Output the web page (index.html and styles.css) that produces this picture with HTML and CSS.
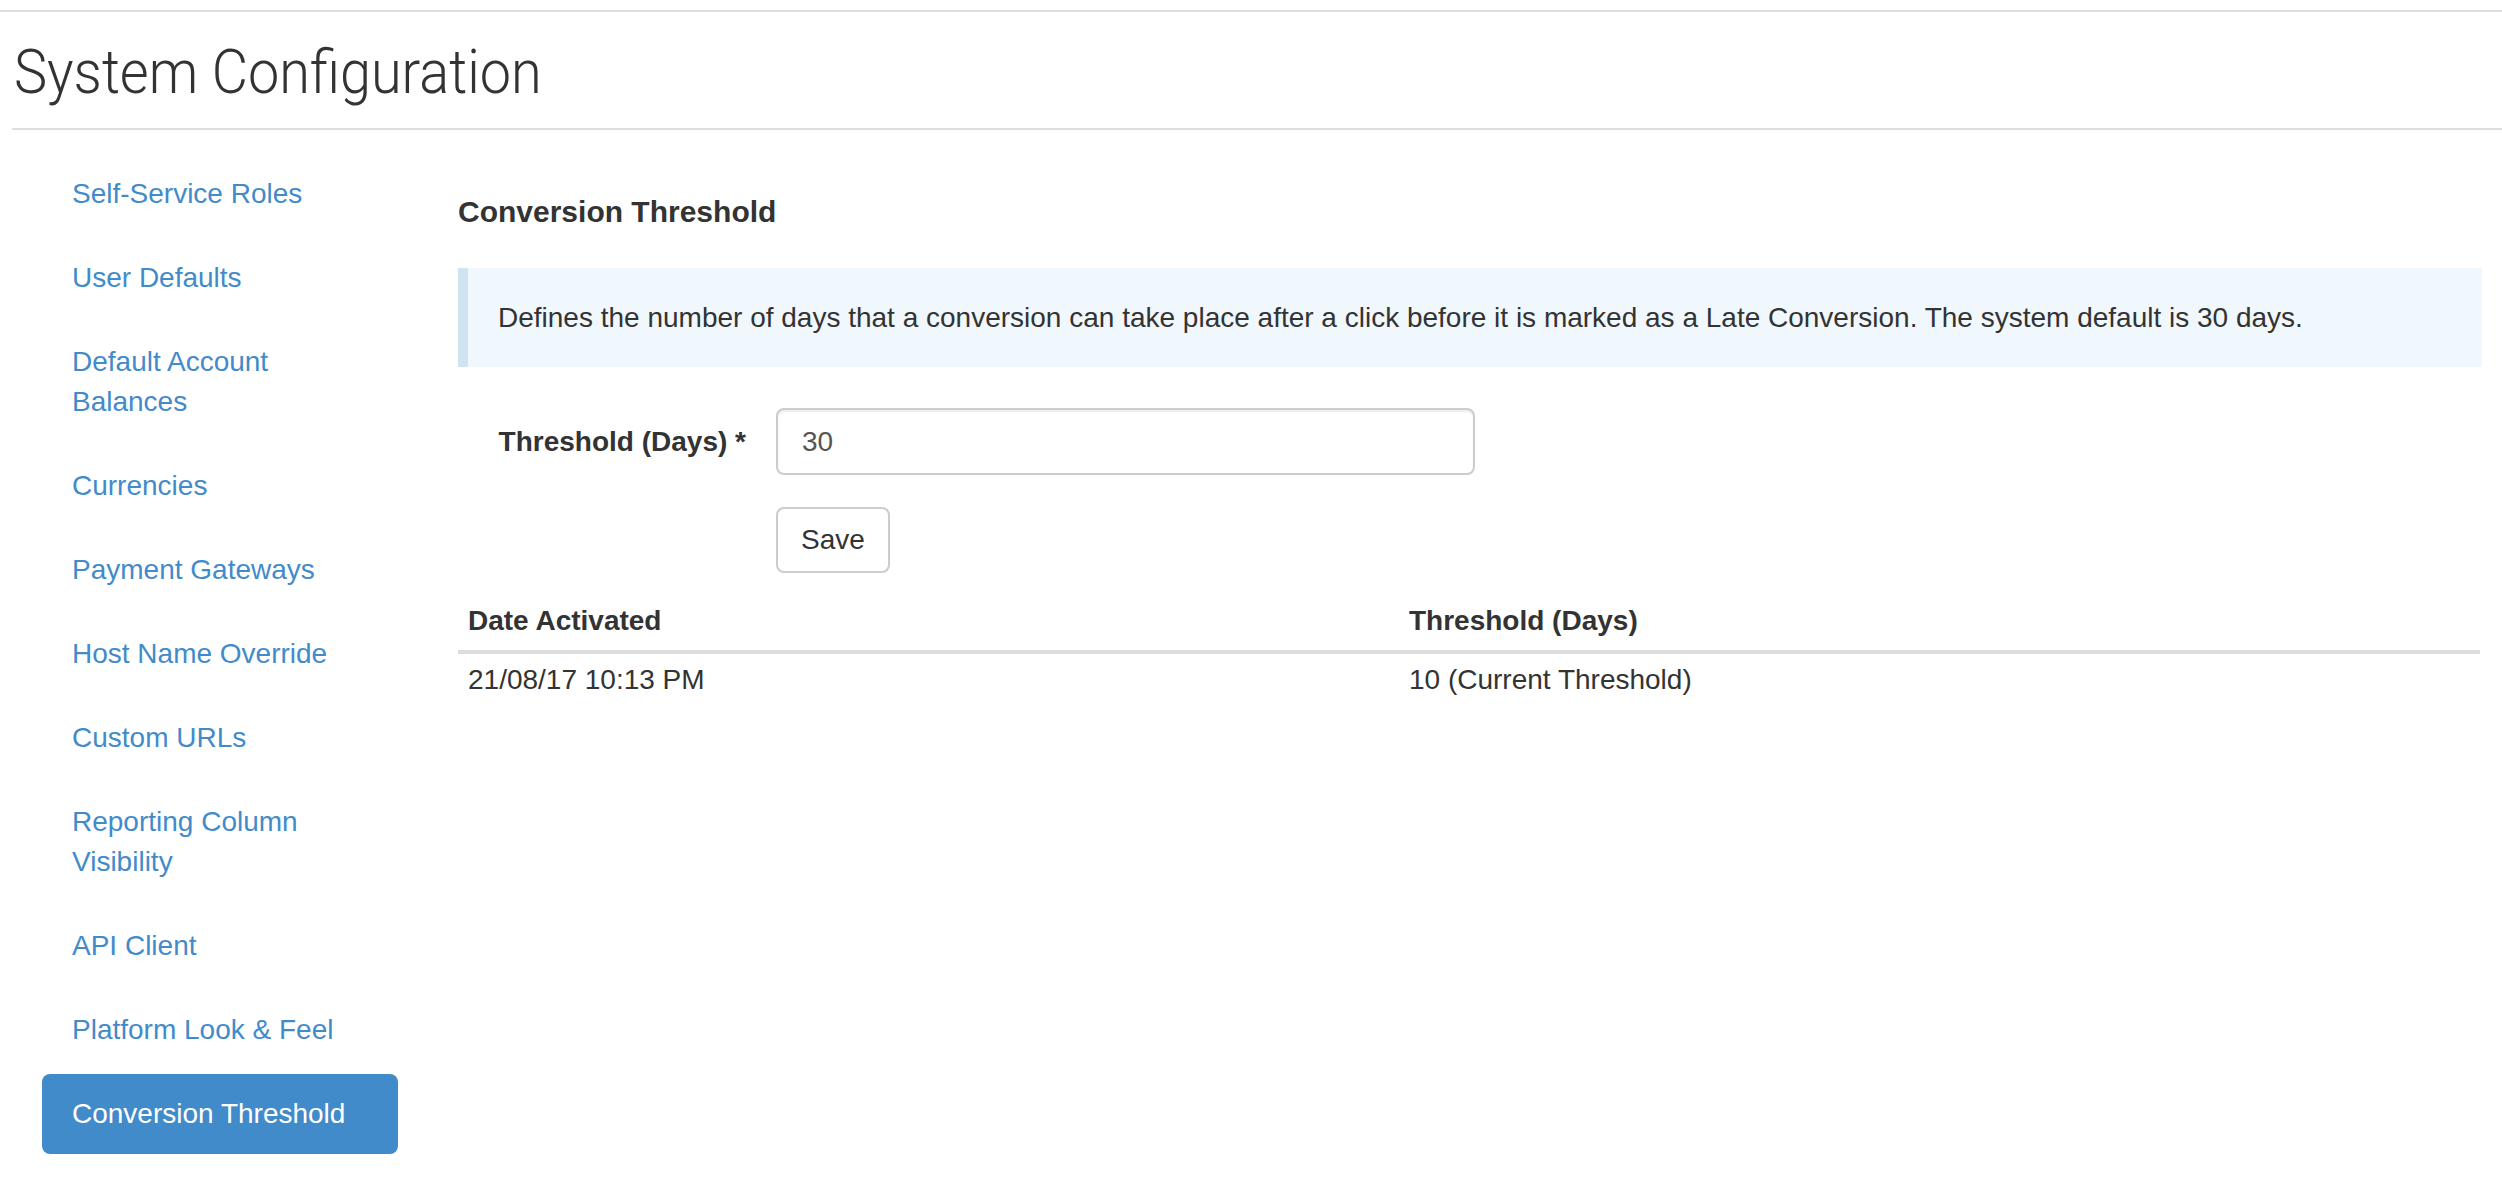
FILE: index.html
```html
<!DOCTYPE html>
<html lang="en">
<head>
<meta charset="utf-8">
<title>System Configuration</title>
<link rel="stylesheet" href="styles.css">
</head>
<body>
  <header class="page-head">
    <div class="title-bar">
      <h1 class="page-title"><span class="page-title-text">System Configuration</span></h1>
    </div>
  </header>

  <div class="layout">
    <nav class="side-nav">
      <ul class="pills">
        <li><a href="#">Self-Service Roles</a></li>
        <li><a href="#">User Defaults</a></li>
        <li><a href="#">Default Account Balances</a></li>
        <li><a href="#">Currencies</a></li>
        <li><a href="#">Payment Gateways</a></li>
        <li><a href="#">Host Name Override</a></li>
        <li><a href="#">Custom URLs</a></li>
        <li><a href="#">Reporting Column Visibility</a></li>
        <li><a href="#">API Client</a></li>
        <li><a href="#">Platform Look &amp; Feel</a></li>
        <li class="active"><a href="#">Conversion Threshold</a></li>
      </ul>
    </nav>

    <main class="content">
      <h4 class="section-title">Conversion Threshold</h4>

      <div class="callout">
        Defines the number of days that a conversion can take place after a click before it is marked as a Late Conversion. The system default is 30 days.
      </div>

      <form class="form-horizontal">
        <div class="form-row">
          <label class="form-label" for="threshold">Threshold (Days) *</label>
          <input class="form-input" id="threshold" type="text" value="30">
        </div>
        <div class="form-row form-actions">
          <button class="btn" type="button">Save</button>
        </div>
      </form>

      <table class="history">
        <thead>
          <tr>
            <th class="col-date">Date Activated</th>
            <th>Threshold (Days)</th>
          </tr>
        </thead>
        <tbody>
          <tr>
            <td>21/08/17 10:13 PM</td>
            <td>10 (Current Threshold)</td>
          </tr>
        </tbody>
      </table>
    </main>
  </div>
</body>
</html>
```

FILE: styles.css
```css
* {
  box-sizing: border-box;
}

html, body {
  margin: 0;
  padding: 0;
  background: #fff;
}

body {
  font-family: "Liberation Sans", Arial, Helvetica, sans-serif;
  font-size: 28px;
  line-height: 40px;
  color: #333;
}

/* Page header: thin rule on top, title, rule underneath */
.page-head {
  margin-top: 10px;
  border-top: 2px solid #ddd;
}

.title-bar {
  margin-left: 12px;
  border-bottom: 2px solid #ddd;
  padding-bottom: 21px;
}

.page-title {
  margin: 25px 0 0 2px;
  font-family: Roboto, "Noto Sans", sans-serif;
  font-weight: 300;
  font-size: 62px;
  line-height: 70px;
  color: #333;
  white-space: nowrap;
}

.page-title-text {
  display: inline-block;
  transform: scaleX(0.9);
  transform-origin: left center;
}

/* Two-column body */
.layout {
  display: flex;
  align-items: flex-start;
  padding-top: 24px;
}

.side-nav {
  flex: 0 0 356px;
  margin-left: 42px;
}

.pills {
  list-style: none;
  margin: 0;
  padding: 0;
}

.pills li + li {
  margin-top: 4px;
}

.pills a {
  display: block;
  padding: 20px 30px;
  border-radius: 8px;
  color: #428bca;
  text-decoration: none;
}

.pills li.active a {
  background: #428bca;
  color: #fff;
}

.content {
  flex: 1 1 auto;
  margin-left: 60px;
  margin-right: 20px;
}

.section-title {
  margin: 38px 0 36px;
  font-size: 30px;
  line-height: 40px;
  font-weight: bold;
  color: #333;
}

.callout {
  background: #f0f7fd;
  border-left: 10px solid #d0e3f1;
  padding: 29.5px 30px;
  color: #333;
}

/* Form */
.form-horizontal {
  margin-top: 41px;
}

.form-row {
  display: flex;
  align-items: center;
}

.form-label {
  flex: 0 0 318px;
  padding-right: 30px;
  text-align: right;
  font-weight: bold;
}

.form-input {
  width: 699px;
  height: 67px;
  padding: 0 24px;
  border: 2px solid #ccc;
  border-radius: 8px;
  font-family: inherit;
  font-size: 28px;
  color: #555;
  background: #fff;
  box-shadow: inset 0 2px 2px rgba(0, 0, 0, 0.075);
}

.form-actions {
  margin-top: 32px;
  padding-left: 318px;
}

.btn {
  padding: 11px 23px;
  border: 2px solid #ccc;
  border-radius: 8px;
  background: #fff;
  font-family: inherit;
  font-size: 28px;
  line-height: 40px;
  color: #333;
}

/* History table */
.history {
  width: calc(100% - 2px);
  margin-top: 18px;
  border-collapse: collapse;
}

.history th,
.history td {
  text-align: left;
  padding: 0 10px;
  line-height: 40px;
}

.history th {
  padding-top: 10px;
  padding-bottom: 9px;
  border-bottom: 4px solid #ddd;
  font-weight: bold;
}

.history td {
  padding-top: 6px;
  padding-bottom: 10px;
}

.history .col-date {
  width: 941px;
}
```
